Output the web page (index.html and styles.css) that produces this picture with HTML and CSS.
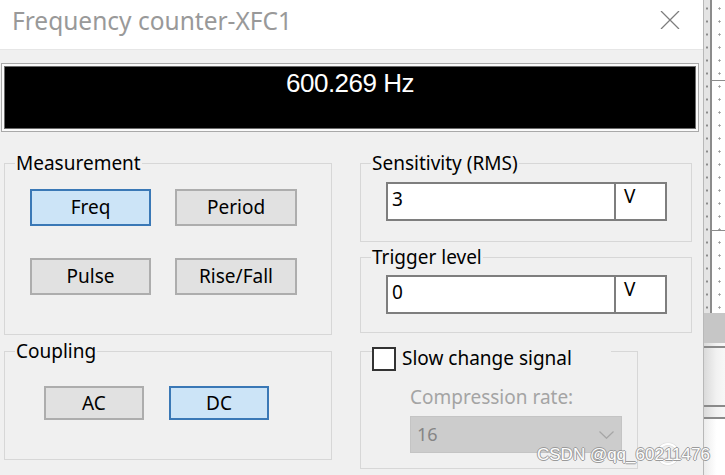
FILE: index.html
```html
<!DOCTYPE html>
<html>
<head>
<meta charset="utf-8">
<title>Frequency counter-XFC1</title>
<link rel="stylesheet" href="styles.css">
</head>
<body>
<div class="screen">
  <div class="dialog">
    <div class="titlebar">
      <span class="title">Frequency counter-XFC1</span>
      <svg class="close" viewBox="0 0 20 18" width="20" height="18"><path d="M1 0 L19 18 M19 0 L1 18" stroke="#7d7d7d" stroke-width="1.3" fill="none"/></svg>
    </div>
    <div class="body">
      <div class="display-frame"><div class="display">600.269 Hz</div></div>
      <div class="panels">
        <div class="col">
          <fieldset class="group">
            <legend>Measurement</legend>
            <div class="btn-grid">
              <div class="btn on">Freq</div>
              <div class="btn">Period</div>
              <div class="btn">Pulse</div>
              <div class="btn">Rise/Fall</div>
            </div>
          </fieldset>
          <fieldset class="group g-coup">
            <legend>Coupling</legend>
            <div class="btn-row">
              <div class="btn small">AC</div>
              <div class="btn small on">DC</div>
            </div>
          </fieldset>
        </div>
        <div class="col">
          <fieldset class="group">
            <legend>Sensitivity (RMS)</legend>
            <div class="field-wrap sens">
              <div class="field"><div class="val">3</div><div class="unit">V</div></div>
            </div>
          </fieldset>
          <fieldset class="group g-trig">
            <legend>Trigger level</legend>
            <div class="field-wrap trig">
              <div class="field"><div class="val">0</div><div class="unit">V</div></div>
            </div>
          </fieldset>
          <fieldset class="group g-slow">
            <legend class="chk-legend"><div class="chk-row"><span class="chk"></span><span class="chk-label">Slow change signal</span></div></legend>
            <div class="slow-body">
              <div class="disabled-label">Compression rate:</div>
              <div class="select"><span>16</span><svg width="15" height="8" viewBox="0 0 15 8"><path d="M0.5 0.5 L7.5 7.3 L14.5 0.5" stroke="#a6a6a6" stroke-width="1.2" fill="none"/></svg></div>
            </div>
          </fieldset>
        </div>
      </div>
    </div>
  </div>
  <div class="strip">
    <div class="strip-top">
      <div class="rail"></div>
      <div class="vline"></div>
      <div class="grid-area">
        <div class="seg seg1"></div>
        <div class="hline"></div>
        <div class="seg seg2"></div>
        <div class="hline"></div>
        <div class="seg seg3"></div>
      </div>
    </div>
    <div class="gblock"></div>
    <div class="lower">
      <div class="sp sp1"></div>
      <div class="hl2"></div>
      <div class="sp sp2"></div>
      <div class="hl2"></div>
      <div class="sp sp3"></div>
      <div class="hl2"></div>
      <div class="sp sp4"></div>
    </div>
  </div>
  <div class="ring"></div>
  <div class="watermark">CSDN @qq_60211476</div>
</div>
</body>
</html>
```

FILE: styles.css
```css
* { box-sizing: border-box; }
html, body { margin: 0; padding: 0; }
body {
  font-family: "Noto Sans", "Open Sans", sans-serif;
  background: #f0f0f0;
  color: #000;
}
.screen {
  position: relative;
  width: 725px;
  height: 475px;
  display: flex;
  overflow: hidden;
}
.dialog {
  width: 704px;
  flex: none;
  border-right: 1px solid #b8b8b8;
  background: #f0f0f0;
  display: flex;
  flex-direction: column;
}
.titlebar {
  height: 50px;
  background: #fff;
  border-bottom: 1px solid #e6e6e6;
  display: flex;
  align-items: flex-start;
  justify-content: space-between;
  padding: 5px 0 0 12px;
}
.title {
  font-size: 24.5px;
  line-height: 32px;
  color: #999;
}
.close {
  margin: 6px 23px 0 0;
}
.body {
  flex: 1;
  padding-top: 13px;
}
.display-frame {
  margin-left: 1px;
  width: 698px;
  height: 69px;
  border: 1px solid #a9a9a9;
  background: #fafafa;
  padding: 2px;
}
.display {
  height: 100%;
  border: 1px solid #6b6b6b;
  background: #000;
  color: #fff;
  text-align: center;
  font-family: "Liberation Sans", Arial, sans-serif;
  font-size: 26px;
  letter-spacing: -0.5px;
  line-height: 28px;
  padding-top: 2px;
}
.panels {
  display: grid;
  grid-template-columns: 328px 332px;
  column-gap: 28px;
  margin: 19px 0 0 4px;
  align-items: start;
}
.col {
  display: flex;
  flex-direction: column;
}
fieldset.group {
  margin: 0;
  padding: 0;
  min-width: 0;
  border: 1px solid #d7d7d7;
}
fieldset.group > legend {
  margin-left: 10px;
  padding: 0 1px;
  font-size: 19px;
  line-height: 25px;
}
.g-coup { margin-top: 4px !important; }
.g-trig { margin-top: 3px !important; }
.g-slow { margin-top: 14px !important; width: 278px; }

.btn-grid {
  display: grid;
  grid-template-columns: 121px 122px;
  column-gap: 24px;
  row-gap: 32px;
  padding: 13px 0 39px 25px;
}
.btn {
  height: 37px;
  border: 2px solid #adadad;
  background: #e1e1e1;
  font-size: 19px;
  line-height: 25px;
  display: flex;
  align-items: center;
  justify-content: center;
}
.btn.on {
  background: #cce4f7;
  border-color: #3a78b6;
}
.btn-row {
  display: flex;
  gap: 25px;
  padding: 22px 0 39px 39px;
}
.btn.small {
  width: 100px;
  height: 34px;
}

.field-wrap.sens { padding: 6px 0 20px 25px; }
.field-wrap.trig { padding: 5px 0 18px 25px; }
.field {
  display: flex;
  height: 39px;
}
.val, .unit {
  background: #fff;
  border: 2px solid #7e7e7e;
  font-size: 19px;
  line-height: 25px;
}
.val {
  width: 230px;
  padding: 3px 0 0 4px;
}
.unit {
  width: 51px;
  border-left: 0;
  padding: 0 0 0 8px;
}

.chk-legend {
  margin-left: 11px !important;
  padding: 0 !important;
  width: 239px;
  height: 9px;
  overflow: visible;
}
.chk-row {
  display: flex;
  align-items: flex-start;
}
.chk {
  width: 24px;
  height: 24px;
  border: 2px solid #333;
  background: #fff;
  flex: none;
}
.chk-label {
  margin-left: 6px;
  margin-top: -1px;
  font-size: 19px;
  line-height: 25px;
  white-space: nowrap;
}
.slow-body {
  padding: 29px 0 15px 49px;
}
.disabled-label {
  font-size: 19px;
  line-height: 25px;
  color: #a4a4a4;
}
.select {
  margin-top: 6px;
  width: 212px;
  height: 37px;
  background: #cccccc;
  border: 1px solid #c4c4c4;
  display: flex;
  align-items: center;
  justify-content: space-between;
  padding: 0 7px 0 6px;
  font-size: 18px;
  line-height: 25px;
  color: #858585;
}

/* background strip to the right of the dialog */
.strip {
  flex: 1;
  display: flex;
  flex-direction: column;
  background: #fff;
}
.strip-top {
  height: 313px;
  display: flex;
}
.rail {
  width: 6px;
  background-color: #e4e4e4;
  background-image: radial-gradient(circle, #8a8a8a 0.9px, transparent 1.3px);
  background-size: 6px 13px;
  background-position: 0 2px;
}
.vline {
  width: 2px;
  background: #8c8c8c;
}
.grid-area {
  flex: 1;
  display: flex;
  flex-direction: column;
  background-color: #fff;
  background-image: radial-gradient(circle, #9a9a9a 0.9px, transparent 1.3px);
  background-size: 13px 13px;
  background-position: 1px 2px;
}
.seg1 { height: 80px; }
.seg2 { height: 149px; }
.seg3 { flex: 1; }
.hline { height: 1px; background: #8c8c8c; }
.gblock {
  height: 30px;
  background: #c6c6c6;
}
.lower {
  flex: 1;
  display: flex;
  flex-direction: column;
  background: linear-gradient(to right, #dadada, #f2f2f2 60%, #f7f7f7);
}
.sp1 { height: 3px; }
.sp2 { height: 57px; }
.sp3 { height: 10px; }
.sp4 { flex: 1; background: linear-gradient(to right, #ececec, #ffffff 60%); }
.hl2 { height: 2px; background: #8a8a8a; }

/* watermark overlay */
.watermark {
  position: absolute;
  left: 537px;
  top: 445px;
  font-family: "Liberation Sans", Arial, sans-serif;
  font-size: 17px;
  line-height: 20px;
  color: #fdfdfd;
  text-shadow: 1px 0 0 #9a9a9a, -1px 0 0 #9a9a9a, 0 1px 0 #9a9a9a, 0 -1px 0 #9a9a9a;
  white-space: nowrap;
}
.ring {
  position: absolute;
  left: 657px;
  top: 443px;
  width: 22px;
  height: 22px;
  border: 2px solid #fff;
  border-radius: 50%;
  box-shadow: 0 0 1px #9a9a9a, inset 0 0 1px #9a9a9a;
}
```
